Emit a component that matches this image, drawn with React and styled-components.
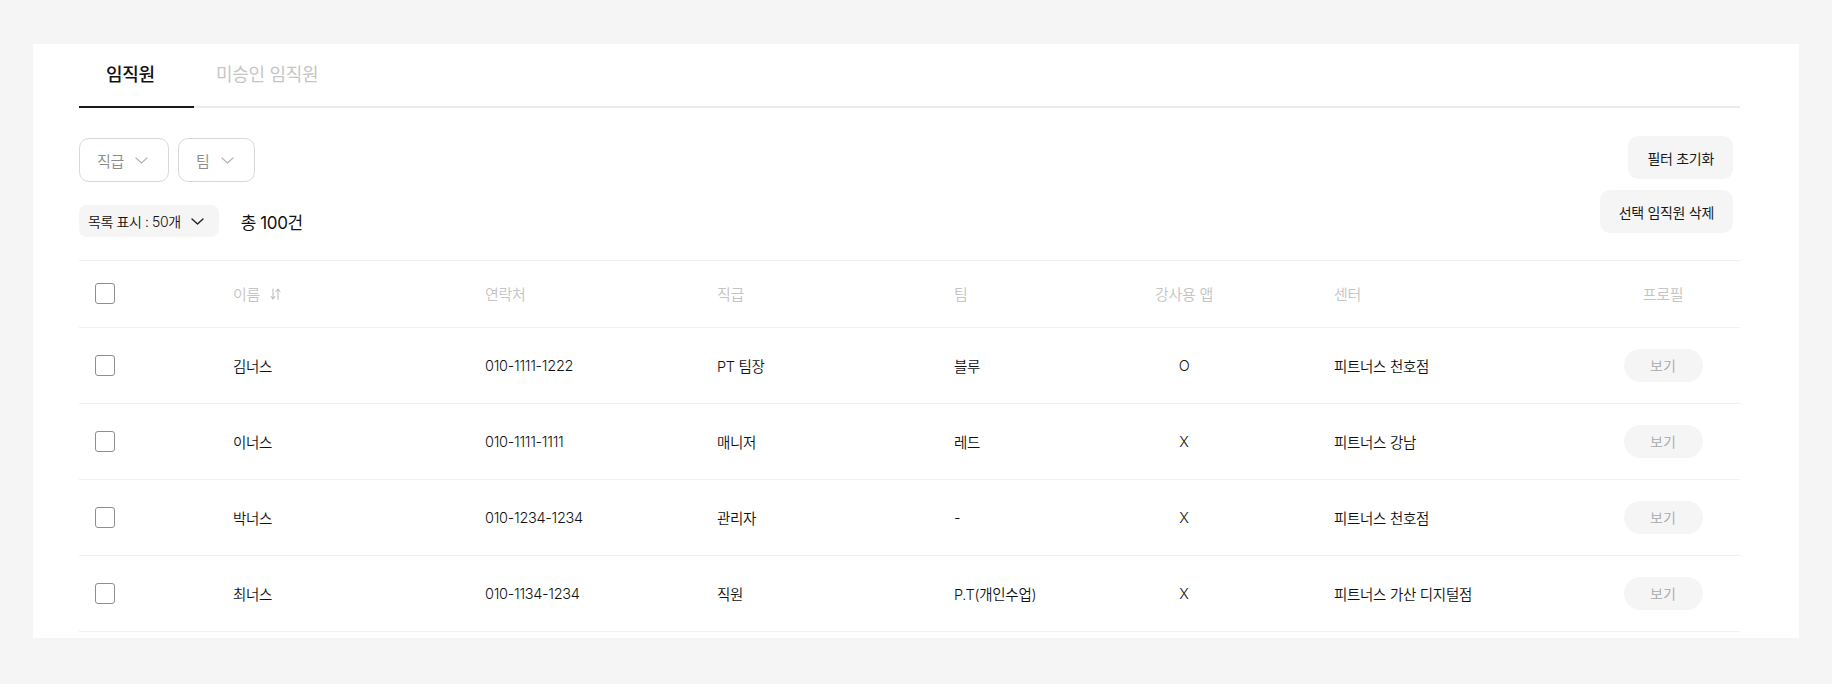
import React, { useState } from "react";
import styled, { createGlobalStyle } from "styled-components";

const GlobalStyle = createGlobalStyle`
  * {
    box-sizing: border-box;
  }
  body {
    margin: 0;
    background: #f5f5f5;
    font-family: Inter, "Noto Sans CJK KR", sans-serif;
    color: #111;
  }
`;

const Page = styled.div`
  padding: 44px 33px 0;
`;

const Panel = styled.section`
  background: #fff;
  padding: 0 59px 6px 46px;
`;

const Tabs = styled.div`
  display: flex;
  border-bottom: 2px solid #ececec;
`;

const Tab = styled.button`
  min-width: ${({ $wide }) => ($wide ? "115px" : "auto")};
  height: 64px;
  margin-bottom: -2px;
  padding: ${({ $wide }) => ($wide ? "0 22px 4px 27px" : "0 22px 4px")};
  text-align: left;
  border: none;
  border-bottom: 2px solid ${({ $active }) => ($active ? "#1a1a1a" : "transparent")};
  background: none;
  font-family: inherit;
  font-size: 18px;
  font-weight: ${({ $active }) => ($active ? 500 : 400)};
  letter-spacing: -0.3px;
  color: ${({ $active }) => ($active ? "#111" : "#c6c6c6")};
  cursor: pointer;
`;

const Toolbar = styled.div`
  display: flex;
  justify-content: space-between;
  align-items: flex-start;
  padding-top: 28px;
  margin-bottom: 23px;
`;

const LeftTools = styled.div`
  display: flex;
  flex-direction: column;
  gap: 23px;
  padding-top: 2px;
`;

const Filters = styled.div`
  display: flex;
  gap: 9px;
`;

const FilterSelect = styled.button`
  display: flex;
  align-items: center;
  gap: 11px;
  height: 44px;
  padding: 0 20px 0 17px;
  border: 1px solid #d8d8d8;
  border-radius: 10px;
  background: #fff;
  font-family: inherit;
  font-size: 15px;
  font-weight: 350;
  letter-spacing: -0.3px;
  color: #8c8c8c;
`;

const ListRow = styled.div`
  display: flex;
  align-items: center;
  gap: 22px;
`;

const PageSize = styled.button`
  display: flex;
  align-items: center;
  gap: 10px;
  height: 32px;
  padding: 0 15px 0 9px;
  border: none;
  border-radius: 8px;
  background: #f5f5f5;
  font-family: inherit;
  font-size: 14px;
  font-weight: 350;
  letter-spacing: -0.4px;
  color: #111;
`;

const Total = styled.span`
  font-size: 17px;
  font-weight: 400;
  letter-spacing: -0.4px;
`;

const RightTools = styled.div`
  display: flex;
  flex-direction: column;
  align-items: flex-end;
  gap: 11px;
  padding-right: 7px;
`;

const GrayButton = styled.button`
  height: 43px;
  padding: 0 19px;
  border: none;
  border-radius: 10px;
  background: #f5f5f5;
  font-family: inherit;
  font-size: 14px;
  font-weight: 400;
  letter-spacing: -0.3px;
  color: #1a1a1a;
  cursor: pointer;
`;

const columns = "154px 252px 232px 237px 80px 300px 246px 160px";

const Row = styled.div`
  display: grid;
  grid-template-columns: ${columns};
  align-items: center;
  height: ${({ $head }) => ($head ? "68px" : "76px")};
  border-top: ${({ $head }) => ($head ? "1px solid #f0f0f0" : "none")};
  border-bottom: 1px solid #f0f0f0;
`;

const Cell = styled.div`
  display: flex;
  align-items: center;
  justify-content: ${({ $center }) => ($center ? "center" : "flex-start")};
  gap: 10px;
  padding-left: ${({ $check, $pad }) => ($check ? "16px" : $pad ? "6px" : "0")};
  padding-bottom: 1px;
  white-space: nowrap;
  font-size: ${({ $head }) => ($head ? "15px" : "14.5px")};
  font-weight: 350;
  letter-spacing: -0.3px;
  color: ${({ $head }) => ($head ? "#c4c4c4" : "#111")};
`;

const Box = styled.span`
  display: inline-block;
  width: 20px;
  height: 21px;
  border: 1.5px solid ${({ $on }) => ($on ? "#333" : "#8e8e8e")};
  border-radius: 3px;
  background: ${({ $on }) => ($on ? "#333" : "#fff")};
  cursor: pointer;
`;

const ViewButton = styled.button`
  width: 79px;
  height: 33px;
  border: none;
  border-radius: 17px;
  background: #f5f5f5;
  font-family: inherit;
  font-size: 14px;
  font-weight: 350;
  color: #a8a8a8;
  cursor: pointer;
`;

const Chevron = ({ size = 13, color = "#b5b5b5", stroke = 1.2 }) => (
  <svg width={size} height={Math.round(size * 0.55)} viewBox="0 0 13 7" fill="none">
    <path d="M1 1l5.5 5L12 1" stroke={color} strokeWidth={stroke} strokeLinecap="round" strokeLinejoin="round" />
  </svg>
);

const SortIcon = () => (
  <svg width="11" height="12" viewBox="0 0 11 12" fill="none" stroke="#c4c4c4" strokeWidth="1.2" strokeLinecap="round" strokeLinejoin="round">
    <path d="M3 1v10M1 8.5L3 11l2-2.5" />
    <path d="M8 11V1M6 3.5L8 1l2 2.5" />
  </svg>
);

const staff = [
  { name: "김너스", phone: "010-1111-1222", rank: "PT 팀장", team: "블루", app: "O", center: "피트너스 천호점" },
  { name: "이너스", phone: "010-1111-1111", rank: "매니저", team: "레드", app: "X", center: "피트너스 강남" },
  { name: "박너스", phone: "010-1234-1234", rank: "관리자", team: "-", app: "X", center: "피트너스 천호점" },
  { name: "최너스", phone: "010-1134-1234", rank: "직원", team: "P.T(개인수업)", app: "X", center: "피트너스 가산 디지털점" },
];

export default function App() {
  const [tab, setTab] = useState(0);
  const [checked, setChecked] = useState([]);

  const toggle = (i) =>
    setChecked((c) => (c.includes(i) ? c.filter((x) => x !== i) : [...c, i]));

  return (
    <Page>
      <GlobalStyle />
      <Panel>
        <Tabs>
          <Tab $wide $active={tab === 0} onClick={() => setTab(0)}>
            임직원
          </Tab>
          <Tab $active={tab === 1} onClick={() => setTab(1)}>
            미승인 임직원
          </Tab>
        </Tabs>

        <Toolbar>
          <LeftTools>
            <Filters>
              <FilterSelect>
                직급 <Chevron />
              </FilterSelect>
              <FilterSelect>
                팀 <Chevron />
              </FilterSelect>
            </Filters>
            <ListRow>
              <PageSize>
                목록 표시 : 50개 <Chevron size={13} color="#222" stroke={1.4} />
              </PageSize>
              <Total>총 100건</Total>
            </ListRow>
          </LeftTools>
          <RightTools>
            <GrayButton>필터 초기화</GrayButton>
            <GrayButton>선택 임직원 삭제</GrayButton>
          </RightTools>
        </Toolbar>

        <Row $head>
          <Cell $check>
            <Box
              $on={checked.length === staff.length}
              onClick={() => setChecked(checked.length === staff.length ? [] : staff.map((_, i) => i))}
            />
          </Cell>
          <Cell $head>
            이름 <SortIcon />
          </Cell>
          <Cell $head>연락처</Cell>
          <Cell $head>직급</Cell>
          <Cell $head>팀</Cell>
          <Cell $head $center>강사용 앱</Cell>
          <Cell $head>센터</Cell>
          <Cell $head $center $pad>프로필</Cell>
        </Row>

        {staff.map((s, i) => (
          <Row key={s.phone}>
            <Cell $check>
              <Box $on={checked.includes(i)} onClick={() => toggle(i)} />
            </Cell>
            <Cell>{s.name}</Cell>
            <Cell>{s.phone}</Cell>
            <Cell>{s.rank}</Cell>
            <Cell>{s.team}</Cell>
            <Cell $center>{s.app}</Cell>
            <Cell>{s.center}</Cell>
            <Cell $center $pad>
              <ViewButton>보기</ViewButton>
            </Cell>
          </Row>
        ))}
      </Panel>
    </Page>
  );
}
